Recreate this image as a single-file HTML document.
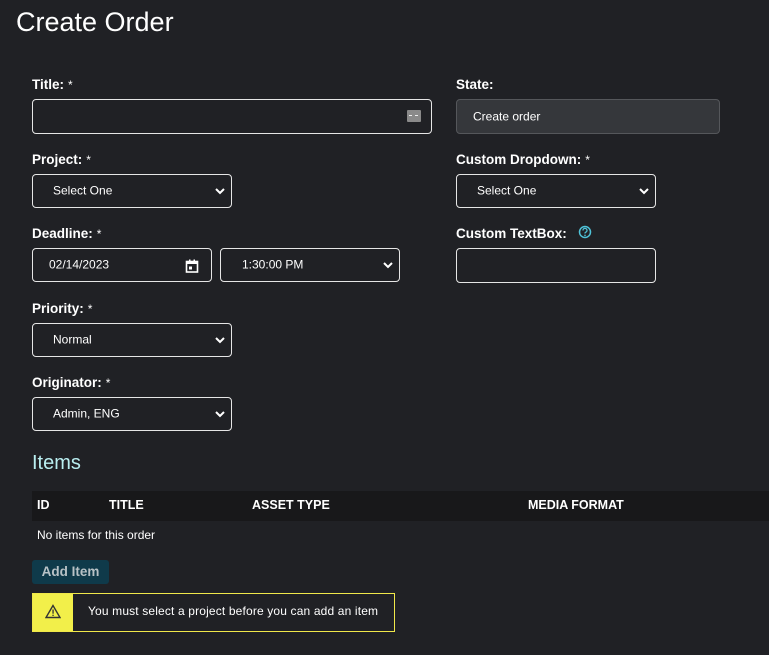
<!DOCTYPE html>
<html><head><meta charset="utf-8"><style>
*{box-sizing:border-box;margin:0;padding:0}
body{width:769px;height:655px;background:#202125;color:#fff;font-family:"Liberation Sans",sans-serif;position:relative;overflow:hidden}
.a{position:absolute}
h1{position:absolute;left:16px;top:7px;font-size:27px;font-weight:normal;color:#fff}
.lbl{position:absolute;font-size:13.5px;font-weight:bold;color:#fff}
.lbl span{font-weight:normal;font-size:12px;margin-left:4px}
.box{position:absolute;border:1px solid #e6e6e6;border-radius:4px;background:#202125;font-size:12px;color:#fff}
.box .t{position:absolute;top:50%;transform:translateY(-55%)}
.chev{position:absolute;right:5px;top:50%;transform:translateY(-50%)}
</style></head><body>
<h1>Create Order</h1>

<div class="lbl" style="left:32px;top:77px">Title:<span>*</span></div>
<div class="box" style="left:32px;top:99px;width:400px;height:35px">
 <div class="a" style="right:10px;top:10px;width:14px;height:12px;background:#8a8a8a;border-radius:1px"><div class="a" style="left:2px;top:5px;width:9px;height:1px;border-top:1px dashed #eee"></div></div>
</div>

<div class="lbl" style="left:32px;top:152px">Project:<span>*</span></div>
<div class="box" style="left:32px;top:174px;width:200px;height:34px"><span class="t" style="left:20px">Select One</span>
<svg class="chev" width="12" height="8" viewBox="0 0 12 8"><path d="M2 2l4 4 4-4" stroke="#fff" stroke-width="2" fill="none"/></svg></div>

<div class="lbl" style="left:32px;top:226px">Deadline:<span>*</span></div>
<div class="box" style="left:32px;top:248px;width:180px;height:34px"><span class="t" style="left:16px">02/14/2023</span>
<svg class="a" style="right:12px;top:10px" width="14" height="14" viewBox="0 0 14 14"><rect x="1.5" y="2.5" width="11" height="10.5" fill="none" stroke="#fff" stroke-width="1.6"/><rect x="1.5" y="2.5" width="11" height="2.5" fill="#fff"/><rect x="4" y="0.5" width="1.5" height="2.5" fill="#fff"/><rect x="8.5" y="0.5" width="1.5" height="2.5" fill="#fff"/><rect x="4" y="7.5" width="3" height="3" fill="#fff"/></svg></div>
<div class="box" style="left:220px;top:248px;width:180px;height:34px"><span class="t" style="left:21px">1:30:00 PM</span>
<svg class="chev" width="12" height="8" viewBox="0 0 12 8"><path d="M2 2l4 4 4-4" stroke="#fff" stroke-width="2" fill="none"/></svg></div>

<div class="lbl" style="left:32px;top:301px">Priority:<span>*</span></div>
<div class="box" style="left:32px;top:323px;width:200px;height:34px"><span class="t" style="left:20px">Normal</span>
<svg class="chev" width="12" height="8" viewBox="0 0 12 8"><path d="M2 2l4 4 4-4" stroke="#fff" stroke-width="2" fill="none"/></svg></div>

<div class="lbl" style="left:32px;top:375px">Originator:<span>*</span></div>
<div class="box" style="left:32px;top:397px;width:200px;height:34px"><span class="t" style="left:20px">Admin, ENG</span>
<svg class="chev" width="12" height="8" viewBox="0 0 12 8"><path d="M2 2l4 4 4-4" stroke="#fff" stroke-width="2" fill="none"/></svg></div>

<div class="lbl" style="left:456px;top:77px">State:</div>
<div class="box" style="left:456px;top:99px;width:264px;height:35px;background:#35373b;border-color:#55575b"><span class="t" style="left:16px">Create order</span></div>

<div class="lbl" style="left:456px;top:152px">Custom Dropdown:<span>*</span></div>
<div class="box" style="left:456px;top:174px;width:200px;height:34px"><span class="t" style="left:20px">Select One</span>
<svg class="chev" width="12" height="8" viewBox="0 0 12 8"><path d="M2 2l4 4 4-4" stroke="#fff" stroke-width="2" fill="none"/></svg></div>

<div class="lbl" style="left:456px;top:226px">Custom TextBox:</div>
<svg class="a" style="left:578px;top:225px" width="14" height="14" viewBox="0 0 14 14"><circle cx="7" cy="7" r="5.5" fill="none" stroke="#4fc3d9" stroke-width="1.5"/><path d="M5 5.5a2 2 0 1 1 2.5 1.8c-.4.2-.5.5-.5 1.2" fill="none" stroke="#4fc3d9" stroke-width="1.3"/><circle cx="7" cy="10.3" r=".8" fill="#4fc3d9"/></svg>
<div class="box" style="left:456px;top:248px;width:200px;height:35px"></div>

<div class="a" style="left:32px;top:452px;font-size:20px;color:#b9eef0">Items</div>
<div class="a" style="left:32px;top:491px;width:737px;height:30px;background:#18181a;font-size:12.5px;font-weight:bold">
 <span class="a" style="left:5px;top:7px">ID</span><span class="a" style="left:77px;top:7px">TITLE</span><span class="a" style="left:220px;top:7px">ASSET TYPE</span><span class="a" style="left:496px;top:7px">MEDIA FORMAT</span>
</div>
<div class="a" style="left:37px;top:528px;font-size:12px">No items for this order</div>
<div class="a" style="left:32px;top:560px;width:77px;height:24px;background:#0f3a4a;border-radius:3px;color:#b8c2c6;font-size:13.5px;font-weight:bold;text-align:center;line-height:24px">Add Item</div>
<div class="a" style="left:32px;top:593px;width:363px;height:39px;border:1px solid #f0e84a;background:#202125">
 <div class="a" style="left:0;top:0;width:40px;height:37px;background:#f2ef4a"></div>
 <svg class="a" style="left:12px;top:10px" width="16" height="15" viewBox="0 0 16 15"><path d="M8 1.5L1 13.5h14z" fill="none" stroke="#333" stroke-width="1.4"/><rect x="7.4" y="5.5" width="1.3" height="4.2" fill="#333"/><rect x="7.4" y="10.7" width="1.3" height="1.3" fill="#333"/></svg>
 <div class="a" style="left:55px;top:10px;font-size:12px;color:#fff;letter-spacing:0.15px">You must select a project before you can add an item</div>
</div>
</body></html>
